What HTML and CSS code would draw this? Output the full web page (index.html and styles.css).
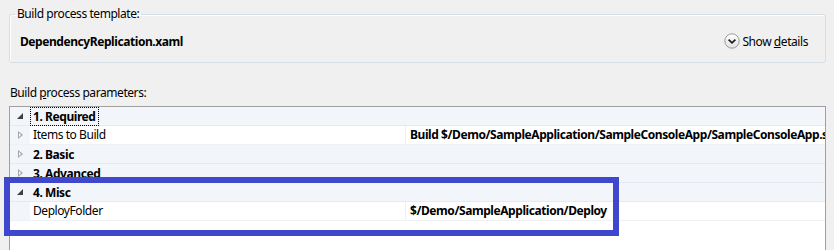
FILE: index.html
```html
<!DOCTYPE html>
<html lang="en">
<head>
  <meta charset="UTF-8" />
  <title>Build Definition - Process</title>
  <link rel="stylesheet" href="styles.css">
</head>
<body>

  <!-- Template group -->
  <fieldset class="template-box">
    <legend>Build process template:</legend>
    <div class="template-row">
      <div class="template-name">DependencyReplication.xaml</div>
      <div class="show-details">
        <svg class="expand-icon" width="16" height="16" viewBox="0 0 16 16">
          <defs>
            <linearGradient id="btnFill" x1="0" y1="0" x2="0" y2="1">
              <stop offset="0" stop-color="#ffffff"/>
              <stop offset="1" stop-color="#e2e2e2"/>
            </linearGradient>
          </defs>
          <circle cx="8" cy="8" r="7.2" fill="url(#btnFill)" stroke="#9a9a9a" stroke-width="1"/>
          <path d="M4.6 6.6 L8 9.8 L11.4 6.6" fill="none" stroke="#1e1e1e" stroke-width="1.8"/>
        </svg>
        <span>Show <u>d</u>etails</span>
      </div>
    </div>
  </fieldset>

  <!-- Parameters grid -->
  <div class="params-label">Build <u>p</u>rocess parameters:</div>
  <div class="grid">
    <div class="group-row">
      <span class="arrow open"></span>
      <span class="group-title focused">1. Required</span>
    </div>
    <div class="data-row">
      <span class="arrow closed"></span>
      <div class="cell name">Items to Build</div>
      <div class="cell value">Build $/Demo/SampleApplication/SampleConsoleApp/SampleConsoleApp.sln</div>
    </div>
    <div class="group-row">
      <span class="arrow closed"></span>
      <span class="group-title">2. Basic</span>
    </div>
    <div class="group-row">
      <span class="arrow closed"></span>
      <span class="group-title">3. Advanced</span>
    </div>
    <div class="group-row">
      <span class="arrow open"></span>
      <span class="group-title">4. Misc</span>
    </div>
    <div class="data-row">
      <span class="arrow"></span>
      <div class="cell name">DeployFolder</div>
      <div class="cell value">$/Demo/SampleApplication/Deploy</div>
    </div>
  </div>

  <!-- highlight drawn over the screenshot -->
  <div class="highlight"></div>

</body>
</html>
```

FILE: styles.css
```css
body {
  margin: 0;
  background-color: #f0f0f0;
  font-family: "Noto Sans", "Open Sans", sans-serif;
  font-size: 12px;
  letter-spacing: -0.43px;
  color: #000;
  position: relative;
  height: 250px;
  overflow: hidden;
}
.template-box {
  margin: 6px 8px 0 9px;
  padding: 11px 17px 13px 10px;
  border: 1px solid #d5dfe5;
  border-radius: 3px;
  box-shadow: inset 1px 1px 0 #fff;
}
.template-box legend {
  margin-left: -5px;
  padding: 0 2px;
  line-height: 16px;
}
.template-row {
  display: flex;
  align-items: center;
  justify-content: space-between;
  height: 16px;
}
.template-name {
  font-weight: bold;
}
.show-details {
  display: flex;
  align-items: center;
  gap: 2px;
}
.expand-icon {
  display: block;
}
.params-label {
  margin: 22px 0 0 10px;
  line-height: 16px;
}
.grid {
  margin: 5px 8px 0 9px;
  height: 160px;
  border: 1px solid #a0a0a0;
  background-color: #fff;
}
.group-row {
  display: flex;
  align-items: center;
  height: 18px;
  border-bottom: 1px solid #e6eaf0;
  background-color: #f2f5fa;
}
.group-title {
  padding: 0 2px;
  font-weight: bold;
  line-height: 17px;
  border: 1px solid transparent;
}
.group-title.focused {
  border: 1px dotted #000;
}
.arrow {
  width: 20px;
  height: 18px;
  position: relative;
  flex-shrink: 0;
}
.arrow.closed::after {
  content: "";
  position: absolute;
  left: 8px;
  top: 5px;
  border-left: 5px solid #a6a6a6;
  border-top: 4px solid transparent;
  border-bottom: 4px solid transparent;
}
.arrow.closed::before {
  content: "";
  position: absolute;
  left: 9px;
  top: 7px;
  border-left: 2px solid #fff;
  border-top: 2px solid transparent;
  border-bottom: 2px solid transparent;
  z-index: 1;
}
.arrow.open::after {
  content: "";
  position: absolute;
  left: 7px;
  top: 6px;
  border-bottom: 6px solid #404040;
  border-left: 6px solid transparent;
}
.data-row {
  display: flex;
  height: 18px;
  border-bottom: 1px solid #eef1f5;
  background-color: #f2f5fa;
}
.data-row .cell {
  background-color: #fff;
  line-height: 18px;
  white-space: nowrap;
  overflow: hidden;
}
.cell.name {
  width: 372px;
  padding-left: 3px;
  border-right: 1px solid #eef0f3;
}
.cell.value {
  flex: 1;
  padding-left: 4px;
  font-weight: bold;
}
.highlight {
  position: absolute;
  left: 4px;
  top: 177px;
  width: 615px;
  height: 59px;
  box-sizing: border-box;
  border: 6px solid #3f48cc;
}
```
